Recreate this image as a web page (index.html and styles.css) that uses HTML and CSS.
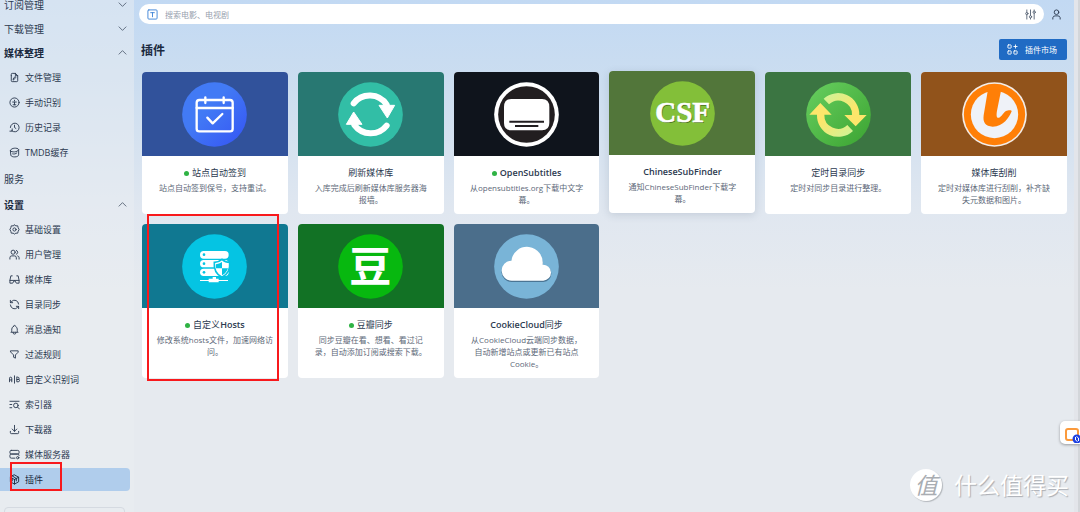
FILE: index.html
```html
<!DOCTYPE html>
<html lang="zh-CN">
<head>
<meta charset="utf-8">
<title>插件</title>
<link rel="stylesheet" href="styles.css">
</head>
<body>
<div class="app">
  <aside class="sidebar">
    <nav class="nav">
      <button class="group" type="button">订阅管理<svg class="chevron" viewBox="0 0 24 24"><path d="M2 7l10 10 10-10"/></svg></button>
      <button class="group" type="button">下载管理<svg class="chevron" viewBox="0 0 24 24"><path d="M2 7l10 10 10-10"/></svg></button>
      <button class="group group-open" type="button">媒体整理<svg class="chevron" viewBox="0 0 24 24"><path d="M2 17l10-10 10 10"/></svg></button>
      <ul class="items">
        <li><a class="item" href="#"><svg class="icon" viewBox="0 0 24 24"><path d="M14 3v5h5M5 8V5a2 2 0 0 1 2-2h7l5 5v11a2 2 0 0 1-2 2H7a2 2 0 0 1-2-2V8M9 17l1-4 4-3 1 2-4 4z"/></svg>文件管理</a></li>
        <li><a class="item" href="#"><svg class="icon" viewBox="0 0 24 24"><circle cx="12" cy="12" r="10"/><path d="M12 7v1M8 11h8M12 11v6M9 17h6"/></svg>手动识别</a></li>
        <li><a class="item" href="#"><svg class="icon" viewBox="0 0 24 24"><path d="M12 7v5l3 2M3 12a9.500 9.500 0 1 1 3 7M2 20h5v-5"/></svg>历史记录</a></li>
        <li><a class="item" href="#"><svg class="icon" viewBox="0 0 24 24"><path d="M3 8c0-7 18-7 18-2v11c0 6-16 6-17 1L3 8c2 4 16 4 18-2M8 15c4 1 6 0 9-2"/></svg>TMDB缓存</a></li>
      </ul>
      <button class="group group-tall" type="button">服务</button>
      <button class="group group-tall group-open" type="button">设置<svg class="chevron" viewBox="0 0 24 24"><path d="M2 17l10-10 10 10"/></svg></button>
      <ul class="items items-flush">
        <li><a class="item" href="#"><svg class="icon" viewBox="0 0 24 24"><path d="M12 2l3 2 4 0 1 4 2 4-2 4-1 4h-4l-3 2-3-2H5l-1-4-2-4 2-4 1-4h4z"/><circle cx="12" cy="12" r="3.500"/></svg>基础设置</a></li>
        <li><a class="item" href="#"><svg class="icon" viewBox="0 0 24 24"><circle cx="9" cy="7" r="4.500"/><path d="M2 22v-3a4 4 0 0 1 4-4h6a4 4 0 0 1 4 4v3M16 3a4.500 4.500 0 0 1 0 8.500M22 22v-3a4 4 0 0 0-3-4"/></svg>用户管理</a></li>
        <li><a class="item" href="#"><svg class="icon" viewBox="0 0 24 24"><path d="M7 4H4L2 14v6h6l3-5h2l3 5h6v-6L20 4h-3M2 14h20"/></svg>媒体库</a></li>
        <li><a class="item" href="#"><svg class="icon" viewBox="0 0 24 24"><path d="M21 11A9 9 0 0 0 6 5L3 8M3 3v5h5M3 13a9 9 0 0 0 15 6l3-3M21 21v-5h-5"/></svg>目录同步</a></li>
        <li><a class="item" href="#"><svg class="icon" viewBox="0 0 24 24"><path d="M10 5a2 2 0 1 1 4 0 7 7 0 0 1 4 6v3a4 4 0 0 0 2 4H4a4 4 0 0 0 2-4v-3a7 7 0 0 1 4-6M9 18v1a3 3 0 0 0 6 0v-1"/></svg>消息通知</a></li>
        <li><a class="item" href="#"><svg class="icon" viewBox="0 0 24 24"><path d="M4 4h16v3l-6 6v7l-4-2v-5L4 7z"/></svg>过滤规则</a></li>
        <li><a class="item" href="#"><svg class="icon" viewBox="0 0 24 24"><path d="M1 17V9q0-2 2.500-2T6 9v8M1 13h5M12 4v16M17 7v10h3q3 0 3-3t-3-2h-3 3q2 0 2-2.500T20 7z"/></svg>自定义识别词</a></li>
        <li><a class="item" href="#"><svg class="icon" viewBox="0 0 24 24"><path d="M2 5h20M2 12h4M2 19h4M19 18l4 4"/><circle cx="15" cy="14" r="5"/></svg>索引器</a></li>
        <li><a class="item" href="#"><svg class="icon" viewBox="0 0 24 24"><path d="M3 16v3a2 2 0 0 0 2 2h14a2 2 0 0 0 2-2v-3M7 11l5 5 5-5M12 3v13"/></svg>下载器</a></li>
        <li><a class="item" href="#"><svg class="icon" viewBox="0 0 24 24"><rect x="2" y="3" width="20" height="8" rx="3"/><path d="M13 20H5a3 3 0 0 1-3-3v-3a3 3 0 0 1 3-3h14a3 3 0 0 1 3 3"/><circle cx="19" cy="19" r="2.500"/></svg>媒体服务器</a></li>
        <li><a class="item item-active" href="#" aria-current="page"><svg class="icon" viewBox="0 0 24 24"><path d="M12 2l9 5v10l-9 5-9-5V7zM12 12l9-5M12 12v10M12 12L3 7M7 4l9 6v5M7 10v5"/></svg>插件</a></li>
      </ul>
      <div class="nav-footer"></div>
    </nav>
  </aside>

  <main class="main">
    <header class="topbar">
      <form class="search">
        <svg class="icon icon-blue" viewBox="0 0 24 24"><rect x="2" y="2" width="20" height="20" rx="2"/><path d="M8 8h8M12 8v9"/></svg>
        <input class="search-input" type="text" placeholder="搜索电影、电视剧" aria-label="搜索">
        <button class="plain" type="button" aria-label="筛选"><svg class="icon icon-thin" viewBox="0 0 24 24"><path d="M4 2v5M4 13v9M12 2v12M12 20v2M20 2v2M20 10v12"/><circle cx="4" cy="10" r="2.500"/><circle cx="12" cy="17" r="2.500"/><circle cx="20" cy="7" r="2.500"/></svg></button>
      </form>
      <button class="plain" type="button" aria-label="用户"><svg class="icon" viewBox="0 0 24 24"><circle cx="12" cy="7" r="5"/><path d="M4 22v-3a5 5 0 0 1 5-4h6a5 5 0 0 1 5 4v3"/></svg></button>
    </header>

    <div class="page-head">
      <h1 class="page-title">插件</h1>
      <button class="market" type="button"><svg class="icon" viewBox="0 0 24 24"><rect x="2" y="2" width="7" height="7" rx="1"/><rect x="2" y="15" width="7" height="7" rx="1"/><rect x="15" y="15" width="7" height="7" rx="1"/><path d="M18.500 2v7M15 5.500h7"/></svg>插件市场</button>
    </div>

    <section class="cards">
      <article class="card">
        <div class="cover cover-blue">
          <svg class="logo" viewBox="0 0 195 195">
            <defs><linearGradient id="signin" x1="0" y1="0" x2="1" y2="1"><stop offset="0.400" stop-color="#427af5"/><stop offset="1" stop-color="#3453f4"/></linearGradient></defs>
            <circle cx="97.500" cy="97.500" r="97" fill="url(#signin)"/>
            <g fill="none" stroke="#fff" stroke-width="7" stroke-linecap="round" stroke-linejoin="round"><rect x="44" y="54" width="108" height="94" rx="8"/><path d="M44 78h108M70 46v17M125 46v17M76 107l16 17 29-28"/></g>
          </svg>
        </div>
        <div class="body"><h2 class="name"><span class="dot"></span>站点自动签到</h2><p class="desc">站点自动签到保号，支持重试。</p></div>
      </article>

      <article class="card">
        <div class="cover cover-teal">
          <svg class="logo" viewBox="0 0 195 195">
            <circle cx="97.500" cy="97.500" r="97" fill="#32bea6"/>
            <g fill="none" stroke="#fff" stroke-width="18" stroke-linecap="round"><path d="M47 64A61 61 0 0 1 146 68M146 131A61 61 0 0 1 49 129"/></g>
            <path fill="#fff" stroke="#fff" stroke-width="3" stroke-linejoin="round" d="M123 70h47l-22 38zM25 127h47L47 90z"/>
          </svg>
        </div>
        <div class="body"><h2 class="name">刷新媒体库</h2><p class="desc">入库完成后刷新媒体库服务器海报墙。</p></div>
      </article>

      <article class="card">
        <div class="cover cover-black">
          <svg class="logo" viewBox="0 0 195 195">
            <circle cx="97.500" cy="97.500" r="97" fill="#fff"/><circle cx="97.500" cy="97.500" r="85" fill="#221e20"/>
            <path fill="#fff" d="M52 51h92q22 0 22 24v48q0 22-22 22H52q-22 0-22-22V75q0-24 22-24z"/>
            <path stroke="#221e20" stroke-width="6" d="M46 119h104M63 132h70"/>
          </svg>
        </div>
        <div class="body"><h2 class="name"><span class="dot"></span><span class="latin">OpenSubtitles</span></h2><p class="desc">从opensubtitles.org下载中文字幕。</p></div>
      </article>

      <article class="card card-raised">
        <div class="cover cover-olive">
          <svg class="logo" viewBox="0 0 195 195">
            <circle cx="97.500" cy="97.500" r="97" fill="#83bf39"/>
            <g class="csf" text-anchor="middle"><text x="101" y="126" fill="#4c7420">CSF</text><text x="98" y="123" fill="#fff" stroke="#fff" stroke-width="2">CSF</text></g>
          </svg>
        </div>
        <div class="body"><h2 class="name"><span class="latin">ChineseSubFinder</span></h2><p class="desc">通知ChineseSubFinder下载字幕。</p></div>
      </article>

      <article class="card">
        <div class="cover cover-green">
          <svg class="logo" viewBox="0 0 195 195">
            <defs>
              <linearGradient id="sync" x1="0" y1="0" x2="1" y2="1"><stop stop-color="#68cf60"/><stop offset="1" stop-color="#3ba331"/></linearGradient>
              <linearGradient id="arrowTop" x1="0" y1="0" x2="1" y2="1"><stop stop-color="#cdf49a"/><stop offset="0.600" stop-color="#fde66b"/></linearGradient>
              <linearGradient id="arrowLow" x1="1" y1="1" x2="0" y2="0"><stop stop-color="#cdf49a"/><stop offset="0.600" stop-color="#fde66b"/></linearGradient>
            </defs>
            <circle cx="97.500" cy="97.500" r="97" fill="url(#sync)"/>
            <path fill="url(#arrowTop)" d="M53 50A64 64 0 0 1 160 99H182L149 133 115 99H138A41 41 0 0 0 69 67z"/>
            <path fill="url(#arrowLow)" d="M141 147A64 64 0 0 1 33 98H10L43 63 77 98H55A41 41 0 0 0 124 129z"/>
          </svg>
        </div>
        <div class="body"><h2 class="name">定时目录同步</h2><p class="desc">定时对同步目录进行整理。</p></div>
      </article>

      <article class="card">
        <div class="cover cover-brown">
          <svg class="logo" viewBox="0 0 195 195">
            <circle cx="97.500" cy="97.500" r="97" fill="#f3ede9"/><circle cx="97.500" cy="97.500" r="92" fill="#ff7f07"/><circle cx="97.500" cy="97.500" r="71" fill="#eff2f8"/>
            <path fill="#ff7f07" d="M78 22H118L105 86C102 104 105 109 111 107 119 104 126 90 132 87 138 84 150 83 149 88 141 106 125 134 92 134 70 133 62 121 65 100z"/>
          </svg>
        </div>
        <div class="body"><h2 class="name">媒体库刮削</h2><p class="desc">定时对媒体库进行刮削，补齐缺失元数据和图片。</p></div>
      </article>

      <article class="card">
        <div class="cover cover-cyan">
          <svg class="logo" viewBox="0 0 195 195">
            <circle cx="97.500" cy="97.500" r="97" fill="#05c4e3"/>
            <g fill="#fff"><rect x="54" y="51" width="86" height="23" rx="11"/><rect x="54" y="78" width="86" height="22" rx="11"/><rect x="54" y="104" width="86" height="22" rx="11"/><path d="M54 138h26v-4h12v-5h10v5h8v4h28v3h-28v4H80v-4H54z"/></g>
            <g fill="#05c4e3"><circle cx="66" cy="62" r="4"/><circle cx="66" cy="89" r="4"/><circle cx="66" cy="115" r="4"/></g>
            <path fill="#fff" stroke="#05c4e3" stroke-width="5" d="M120 76q10 9 23 9 3 31-23 45-26-14-23-45 13 0 23-9z"/>
            <path fill="#05c4e3" d="M120 84v19h-18q-1-6 0-12 10-1 18-7zM120 103h18q-4 14-18 21z"/>
          </svg>
        </div>
        <div class="body"><h2 class="name"><span class="dot"></span>自定义<span class="latin">Hosts</span></h2><p class="desc">修改系统hosts文件，加速网络访问。</p></div>
      </article>

      <article class="card">
        <div class="cover cover-forest">
          <svg class="logo" viewBox="0 0 195 195">
            <circle cx="97.500" cy="97.500" r="97" fill="#07b80f"/>
            <text class="douban" x="97" y="144" text-anchor="middle" fill="#fff">豆</text>
          </svg>
        </div>
        <div class="body"><h2 class="name"><span class="dot"></span>豆瓣同步</h2><p class="desc">同步豆瓣在看、想看、看过记录，自动添加订阅或搜索下载。</p></div>
      </article>

      <article class="card">
        <div class="cover cover-slate">
          <svg class="logo" viewBox="0 0 195 195">
            <circle cx="97.500" cy="97.500" r="97" fill="#79b4d7"/>
            <path fill="#4b7594" d="M54 144a29 29 0 0 1-2-61 47 47 0 0 1 94 11 25 25 0 0 1 2 50z"/>
            <path fill="#fff" d="M54 140a29 29 0 0 1-2-60 47 47 0 0 1 94 12 24 24 0 0 1 2 48z"/>
          </svg>
        </div>
        <div class="body"><h2 class="name"><span class="latin">CookieCloud</span>同步</h2><p class="desc">从CookieCloud云端同步数据，自动新增站点或更新已有站点Cookie。</p></div>
      </article>
    </section>
  </main>
  <div class="scrollbar"></div>
</div>

<div class="mark mark-card"></div>
<div class="mark mark-nav"></div>
<button class="float" type="button" aria-label="工具"><svg class="float-icon" viewBox="0 0 20 20"><rect x="2" y="6" width="12" height="11" rx="2" fill="none" stroke="#fb9a3c" stroke-width="2"/><circle cx="13" cy="16" r="4.500" fill="#1d3fe0"/><path d="M11.500 14v3l2 1.500M14.500 18v-3l-2-1.500" fill="none" stroke="#fff"/></svg></button>
<div class="watermark"><span class="watermark-logo">值</span><span>什么值得买</span></div>
</body>
</html>
```
FILE: styles.css
```css
* { box-sizing: border-box; }

body {
  margin: 0;
  min-height: 100vh;
  overflow: hidden;
  font-family: "Open Sans", "Noto Sans CJK SC", sans-serif;
  font-size: 9px;
  color: #2c3a50;
  background: linear-gradient(#c2d9f3 0, #cbddf0 80px, #e0e7f0 210px, #e6eaef 290px);
}

h1, h2, p, ul { margin: 0; padding: 0; }
ul { list-style: none; }
a { color: inherit; text-decoration: none; }
button { font: inherit; color: inherit; border: 0; padding: 0; background: none; }

.app { display: flex; height: 100vh; }

.icon {
  flex: none;
  width: 11px;
  height: 11px;
  fill: none;
  stroke: currentColor;
  stroke-width: 2;
  stroke-linecap: round;
  stroke-linejoin: round;
}
.icon-blue { color: #3b82d6; }
.icon-thin { color: #566274; }

/* sidebar */
.sidebar {
  flex: none;
  width: 134px;
  overflow: hidden;
  background: rgba(233, 237, 241, .5);
}
.nav { margin-top: -8px; }
.group {
  display: flex;
  align-items: center;
  justify-content: space-between;
  width: 100%;
  height: 24px;
  padding: 0 7px 0 4px;
  font-size: 10px;
}
.group-tall { height: 26px; }
.group-open { font-weight: 700; color: #1b2a40; }
.chevron {
  width: 9px;
  height: 9px;
  fill: none;
  stroke: #3c4a5e;
  stroke-width: 2;
}
.items { padding-top: 1px; }
.items-flush { padding-top: 0; }
.items li { height: 25px; padding: 1px 4px 1px 0; }
.item {
  display: flex;
  align-items: center;
  gap: 5px;
  height: 23px;
  padding-left: 9px;
  border-radius: 0 4px 4px 0;
}
.item-active { background: #b0cdec; color: #1b2a40; }
.nav-footer {
  height: 30px;
  margin: 15px 9px 0 4px;
  border: 1px solid #d5dae1;
  border-radius: 4px;
}

/* main column */
.main { flex: 1; min-width: 0; padding: 4px 7px 0 5px; }
.topbar { display: flex; align-items: center; gap: 7px; }
.search {
  flex: 1;
  display: flex;
  align-items: center;
  gap: 7px;
  height: 20px;
  padding: 0 8px;
  border-radius: 10px;
  background: #fff;
}
.search-input {
  flex: 1;
  min-width: 0;
  border: 0;
  padding: 0;
  font: inherit;
  font-size: 8px;
  outline: 0;
  background: none;
}
.search-input::placeholder { color: #98a1ae; }
.plain { display: flex; }
.topbar > .plain { padding-right: 5px; }

.page-head {
  display: flex;
  align-items: center;
  justify-content: space-between;
  margin: 15px 0 12px 2px;
}
.page-title { padding-top: 2px; font-size: 12px; line-height: 19px; color: #1b2a40; }
.market {
  display: flex;
  align-items: center;
  gap: 7px;
  height: 21px;
  padding: 0 10px 0 8px;
  border-radius: 2px;
  font-size: 8px;
  color: #fff;
  background: #206bc4;
}

/* plugin cards */
.cards {
  display: grid;
  grid-template-columns: repeat(6, 1fr);
  gap: 10px;
  padding-left: 3px;
}
.card {
  overflow: hidden;
  border-radius: 4px;
  background: #fff;
}
.card-raised {
  transform: translateY(-1px);
  box-shadow: 0 2px 8px rgba(40, 60, 90, .15);
}
.cover {
  display: flex;
  align-items: center;
  justify-content: center;
  height: 84px;
}
.cover-blue { background: #31529b; }
.cover-teal { background: #287872; }
.cover-black { background: #0f141c; }
.cover-olive { background: #52763a; }
.cover-green { background: #3b7542; }
.cover-brown { background: #91531b; }
.cover-cyan { background: #107891; }
.cover-forest { background: #127225; }
.cover-slate { background: #4b6e8b; }
.logo { width: 65px; height: 65px; overflow: visible; }
.csf { font: 700 87px "Liberation Serif", serif; }
.douban { font: 700 126px "Noto Sans CJK SC", sans-serif; }
.body { padding: 10px 14px 8px; text-align: center; }
.name { font-size: 9px; line-height: 14px; font-weight: 400; }
.latin { font-weight: 600; }
.dot {
  display: inline-block;
  width: 5px;
  height: 5px;
  margin-right: 3px;
  border-radius: 50%;
  background: #2fb344;
}
.desc { margin-top: 2px; font-size: 8px; line-height: 12px; color: #5d6878; }

.scrollbar {
  flex: none;
  width: 6px;
  background: #e3e5ea;
  border-right: 2px solid #d3d6da;
}

/* layers over the page */
.mark { position: absolute; border: 2px solid #f8191c; }
.mark-card { left: 147px; top: 214px; width: 132px; height: 167px; }
.mark-nav { left: 10px; top: 462px; width: 52px; height: 29px; }
.float {
  position: absolute;
  right: 0;
  top: 421px;
  width: 20px;
  height: 23px;
  padding-left: 4px;
  overflow: hidden;
  border-radius: 5px 0 0 5px;
  background: #fff;
  box-shadow: 0 1px 3px rgba(0, 0, 0, .35);
}
.float-icon { display: block; width: 20px; height: 20px; }
.watermark {
  position: absolute;
  right: 11px;
  bottom: 11px;
  display: flex;
  align-items: center;
  gap: 12px;
  font-size: 23px;
  line-height: 32px;
  color: #fff;
  text-shadow: 1px 1px 1px #a9adb3;
}
.watermark-logo {
  width: 32px;
  height: 32px;
  border-radius: 50%;
  text-align: center;
  font-style: italic;
  color: #a9adb2;
  text-shadow: none;
  background: #fff;
  box-shadow: 1px 1px 1px #b4b8bd;
}
```
